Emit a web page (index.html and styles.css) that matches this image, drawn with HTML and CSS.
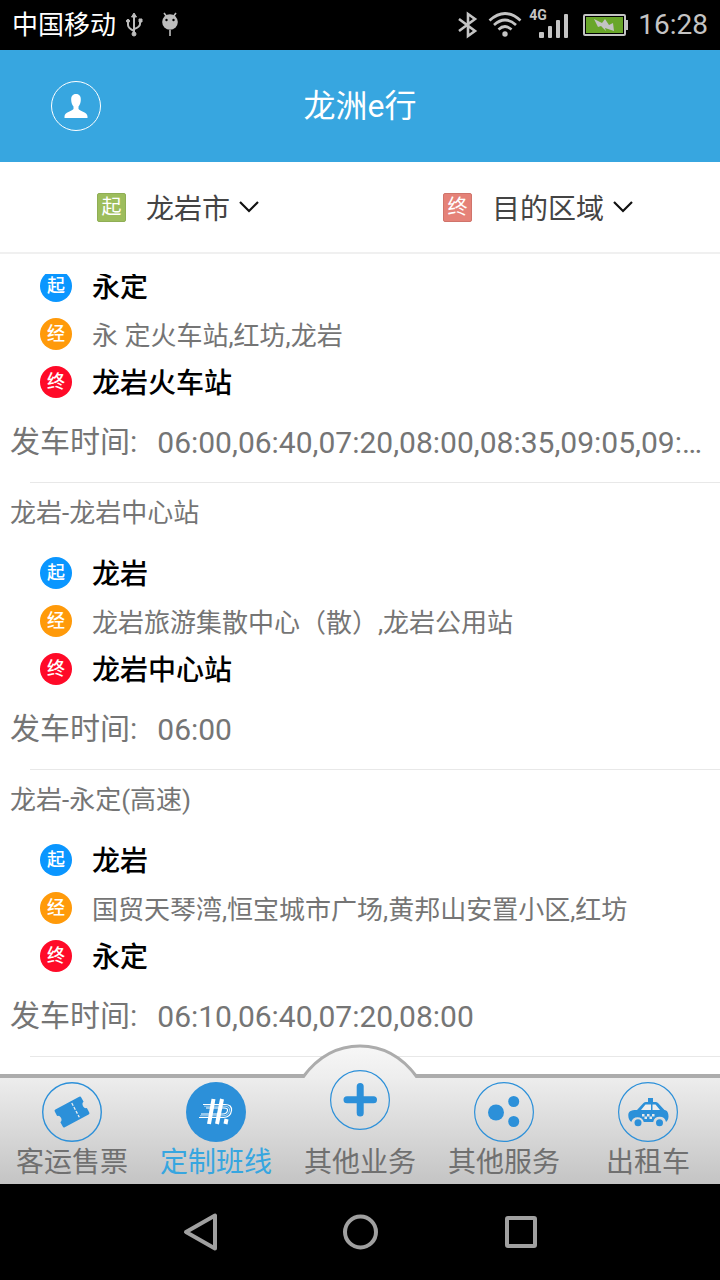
FILE: index.html
```html
<!DOCTYPE html>
<html lang="zh-CN">
<head>
<meta charset="utf-8">
<meta name="viewport" content="width=device-width, initial-scale=1">
<title>龙洲e行</title>
<link rel="stylesheet" href="styles.css">
</head>
<body>
<div class="status">
  <span class="carrier">中国移动</span>
  <svg class="usb" width="18" height="26" viewBox="0 0 18 26" fill="#bdbdbd" stroke="#bdbdbd" stroke-width="2"><path d="M9 4v17M3 9v4q0 3 6 6M15 9v3q0 3-6 5" fill="none"/><path d="M9 1l2.500 4h-5zM2 8h2v2H2zM14 7h3v3h-3z" stroke-width="1"/><circle cx="3" cy="9" r="1.500" stroke-width="1"/><circle cx="9" cy="22" r="2" stroke-width="1"/></svg>
  <svg class="debug" width="18" height="26" viewBox="0 0 18 26"><path d="M3 1l3 4M15 1l-3 4M9 18v6" stroke="#bdbdbd" stroke-width="1.600"/><circle cx="9" cy="10" r="7.800" fill="#bdbdbd"/><circle cx="5.500" cy="8" r="1.200"/><circle cx="12.500" cy="8" r="1.200"/></svg>
  <span class="grow"></span>
  <svg width="20" height="28" viewBox="0 0 20 28" fill="none" stroke="#c4c4c4" stroke-width="2.600"><path d="M1 8l16 12-7 5V3l7 5L1 20"/></svg>
  <svg class="wifi" width="34" height="28" viewBox="0 0 34 28" fill="none" stroke="#c4c4c4" stroke-width="2.700"><path d="M1.500 9.500Q17-4.500 32.500 9.500M6 14Q17 4 28 14M10.500 18.500Q17 12.500 23.500 18.500"/><circle cx="17" cy="23" r="2.700" fill="#c4c4c4" stroke="none"/></svg>
  <span class="signal"><span class="gen">4G</span><svg width="40" height="30" viewBox="0 0 40 30" fill="#c4c4c4"><rect x="10" y="24" width="5" height="6" rx="1"/><rect x="19" y="18" width="4" height="12" rx="1"/><rect x="27" y="12" width="4" height="18" rx="1"/><rect x="35" y="6" width="4" height="24" rx="1"/></svg></span>
  <svg class="battery" width="46" height="24" viewBox="0 0 46 24"><rect x="1" y="2" width="41" height="20" rx="1" fill="none" stroke="#c4c4c4" stroke-width="2"/><rect x="3" y="4" width="37" height="16" fill="#69a62a"/><path d="M43 7h2v10h-2z" fill="#c4c4c4"/><path d="M11 6l8 4 3-4 4 6 4-2 1 8-9-3 1 3-5-5-3 1z" fill="#c4c4c4"/></svg>
  <span class="clock">16:28</span>
</div>

<header class="header">
  <button class="user" aria-label="用户">
    <svg width="50" height="50" viewBox="0 0 50 50"><circle cx="25" cy="25" r="24.500" fill="none" stroke="#fff"/><path d="M25 13c-3.500 0-5 2.500-4.800 6 .1 3 1 5 2.300 6.500v2.500c-1.500 2.500-9 3-9 7.500V37h23v-1.500c0-4.500-7.500-5-9-7.500v-2.500c1.300-1.500 2.200-3.500 2.300-6.500.2-3.500-1.300-6-4.800-6z" fill="#fff"/></svg>
  </button>
  <h1 class="title">龙洲e行</h1>
</header>

<div class="filters">
  <button class="filter"><span class="tag tag-from">起</span><span class="place">龙岩市</span><svg class="chevron" width="20" height="14" viewBox="0 0 20 14"><path d="M1 2l9 9 9-9" fill="none" stroke="#111" stroke-width="2.200"/></svg></button>
  <button class="filter"><span class="tag tag-to">终</span><span class="place">目的区域</span><svg class="chevron" width="20" height="14" viewBox="0 0 20 14"><path d="M1 2l9 9 9-9" fill="none" stroke="#111" stroke-width="2.200"/></svg></button>
</div>

<main class="list">
  <article class="route route-scrolled">
    <ul class="stops">
      <li class="stop"><span class="dot from">起</span>永定</li>
      <li class="stop via-row"><span class="dot via">经</span>永 定火车站,红坊,龙岩</li>
      <li class="stop"><span class="dot to">终</span>龙岩火车站</li>
    </ul>
    <p class="times"><span class="label">发车时间:</span><span class="hours">06:00,06:40,07:20,08:00,08:35,09:05,09:…</span></p>
  </article>
  <article class="route">
    <h2 class="name">龙岩-龙岩中心站</h2>
    <ul class="stops">
      <li class="stop"><span class="dot from">起</span>龙岩</li>
      <li class="stop via-row"><span class="dot via">经</span>龙岩旅游集散中心（散）,龙岩公用站</li>
      <li class="stop"><span class="dot to">终</span>龙岩中心站</li>
    </ul>
    <p class="times"><span class="label">发车时间:</span><span class="hours">06:00</span></p>
  </article>
  <article class="route">
    <h2 class="name">龙岩-永定(高速)</h2>
    <ul class="stops">
      <li class="stop"><span class="dot from">起</span>龙岩</li>
      <li class="stop via-row"><span class="dot via">经</span>国贸天琴湾,恒宝城市广场,黄邦山安置小区,红坊</li>
      <li class="stop"><span class="dot to">终</span>永定</li>
    </ul>
    <p class="times"><span class="label">发车时间:</span><span class="hours">06:10,06:40,07:20,08:00</span></p>
  </article>
  <article class="route"></article>
</main>

<nav class="tabs">
  <svg class="hump" width="116" height="36" viewBox="0 0 116 36">
    <defs><linearGradient id="hump" x1="0" y1="0" x2="0" y2="1"><stop offset="0" stop-color="#f7f7f7"/><stop offset="1" stop-color="#ededed"/></linearGradient></defs>
    <path d="M2 34Q24 2 58 2t56 32v2H2z" fill="url(#hump)"/>
    <path d="M1 33Q24 2 58 2t57 31" fill="none" stroke="#acacac" stroke-width="3"/>
  </svg>
  <a class="tab" href="#tickets">
    <svg width="60" height="60" viewBox="0 0 60 60"><circle cx="30" cy="30" r="29.300" fill="none" stroke="#2c90d9" stroke-width="1.400"/><g transform="rotate(-28 30 30)"><path d="M16.500 20h27q1.500 0 1.500 1.500v5q-2.500.5-2.500 3.500t2.500 3.500v5q0 1.500-1.500 1.500h-27q-1.500 0-1.500-1.500v-5q2.500-.5 2.500-3.500t-2.500-3.500v-5q0-1.500 1.500-1.500z" fill="#2c90d9"/><path d="M34 22v16" stroke="#eee" stroke-width="1.300" stroke-dasharray="3 1.500"/></g></svg>
    <span>客运售票</span>
  </a>
  <a class="tab active" href="#lines" aria-current="page">
    <svg width="60" height="60" viewBox="0 0 60 60"><circle cx="30" cy="30" r="30" fill="#2c90d9"/><g fill="none" stroke="#fff"><path d="M27.500 17l-4.500 25M36 17l-5 25" stroke-width="4"/><path d="M40.500 37l-1 5" stroke-width="4"/><path d="M17 22.500h22q7 0 6.500 6-1 7-8 7H13" stroke-width="1.200"/><path d="M20 26h18q4 0 3.500 2.500-.5 3.500-5 3.500H15" stroke-width="1.200"/><path d="M18 24.200h21q5 .3 4.500 4.300-1 5.300-6.500 5.300H14" stroke-width="1" opacity=".6"/></g></svg>
    <span>定制班线</span>
  </a>
  <a class="tab raised" href="#more">
    <svg width="60" height="60" viewBox="0 0 60 60"><circle cx="30" cy="30" r="29.400" fill="none" stroke="#2c90d9" stroke-width="1.200"/><path d="M30.200 16.500v26.500M17 29.800h26.500" stroke="#2c90d9" stroke-width="7" stroke-linecap="round"/></svg>
    <span>其他业务</span>
  </a>
  <a class="tab" href="#services">
    <svg width="60" height="60" viewBox="0 0 60 60"><circle cx="30" cy="30" r="29.400" fill="none" stroke="#2c90d9" stroke-width="1.200"/><g fill="#2c90d9"><circle cx="22" cy="30.500" r="8"/><circle cx="39.700" cy="19.500" r="5.500"/><circle cx="39.700" cy="39.500" r="5.500"/></g></svg>
    <span>其他服务</span>
  </a>
  <a class="tab" href="#taxi">
    <svg width="60" height="60" viewBox="0 0 60 60"><circle cx="30" cy="30" r="29.400" fill="none" stroke="#2c90d9" stroke-width="1.200"/><path d="M30 16h5v4h2.500q1.500 0 2.500 1l6.500 7c3 .5 4 3 4 6.500 0 2.500-1 4.500-2.500 5.500a6.500 6.500 0 0 0-12.800 0H25.800a6.500 6.500 0 0 0-12.500 0c-2-1.500-3-3.500-3-6.500 0-4 2-5.500 8.700-5.500l6.500-7q1-1 2.500-1h2z" fill="#2c90d9"/><path d="M23 28l4.500-5.500h5.500V28zM34.500 22.500h3l4.500 5.500h-7.500z" fill="#eee"/><path d="M24 32h2.500v2.500H24zM29 32h2.500v2.500H29zM34 32h2.500v2.500H34zM26.500 34.500H29V37h-2.500zM31.500 34.500H34V37h-2.500z" fill="#e8e8e8"/><g fill="#2c90d9"><circle cx="20" cy="40.700" r="3.500"/><circle cx="41.500" cy="40.700" r="3.500"/></g></svg>
    <span>出租车</span>
  </a>
</nav>

<div class="system">
  <button aria-label="返回"><svg width="36" height="40" viewBox="0 0 36 40"><path d="M4 20L33 3.500v33z"/></svg></button>
  <button aria-label="主页"><svg width="36" height="40" viewBox="0 0 36 40"><circle cx="18.500" cy="20" r="15.500"/></svg></button>
  <button aria-label="最近任务"><svg width="36" height="40" viewBox="0 0 36 40"><rect x="5" y="6" width="28" height="28" rx="1"/></svg></button>
</div>
</body>
</html>
```
FILE: styles.css
```css
* { box-sizing: border-box; }
body {
  margin: 0;
  height: 100vh;
  display: flex;
  flex-direction: column;
  overflow: hidden;
  background: #fff;
  color: #757575;
  font-family: Roboto, "Noto Sans CJK SC", sans-serif;
}
svg { display: block; flex: none; }
button { padding: 0; border: 0; background: none; font: inherit; color: inherit; }
h1, h2, p, ul { margin: 0; padding: 0; font-weight: 400; }

.status {
  flex: none;
  display: flex;
  align-items: center;
  height: 50px;
  padding: 0 12px;
  background: #000;
  color: #c4c4c4;
}
.carrier { color: #fff; font-size: 26px; line-height: 48px; }
.usb { margin-left: 9px; }
.debug { margin-left: 18px; }
.grow { flex: 1; }
.wifi { margin-left: 10px; }
.signal { position: relative; margin-left: 7px; padding-bottom: 4px; }
.gen { position: absolute; left: 0; top: 0; font-size: 14px; line-height: 14px; font-weight: 700; }
.battery { margin-left: 14px; }
.clock { margin-left: 9px; font-size: 28px; line-height: 52px; }

.header {
  flex: none;
  display: grid;
  grid-template-columns: 50px 1fr 50px;
  align-items: center;
  height: 112px;
  padding: 0 51px;
  background: #37a6e0;
  color: #fff;
}
.title { font-size: 32px; line-height: 48px; text-align: center; }

.filters {
  flex: none;
  display: flex;
  height: 92px;
  border-bottom: 2px solid #f0f0f0;
  color: #444;
}
.filter {
  flex: 1;
  display: flex;
  align-items: center;
  justify-content: center;
  padding-right: 4px;
  font-size: 28px;
  line-height: 40px;
}
.place { padding-top: 5px; }
.tag {
  width: 29px;
  height: 29px;
  margin-right: 20px;
  border: 1px solid #8fae55;
  border-radius: 2px;
  background: #9dbd5c;
  color: #fff;
  font-size: 20px;
  line-height: 26px;
  text-align: center;
}
.tag-to { background: #e58278; border-color: #d0746b; }
.chevron { margin-left: 9px; }

.list { flex: 1; min-height: 0; overflow: hidden; margin-top: 20px; }
.route { padding-bottom: 4px; }
.route + .route::before {
  content: "";
  display: block;
  height: 1px;
  margin-left: 30px;
  background: #e8e8e8;
}
.route-scrolled { margin-top: -12px; }
.name { height: 66px; padding-left: 10px; font-size: 26px; line-height: 60px; }
.stops { list-style: none; padding-left: 40px; }
.stop {
  display: flex;
  height: 48px;
  font-size: 28px;
  font-weight: 500;
  line-height: 52px;
  white-space: nowrap;
  color: #000;
}
.via-row { font-size: 26px; font-weight: 400; color: #757575; }
.dot {
  flex: none;
  width: 32px;
  height: 32px;
  margin: 8px 20px 8px 0;
  border-radius: 50%;
  color: #fff;
  font-size: 18px;
  font-weight: 500;
  line-height: 32px;
  text-align: center;
}
.from { background: #0a96ff; }
.via { background: #ff9a0a; }
.to { background: #ff0a28; }
.times {
  display: flex;
  height: 72px;
  padding-left: 10px;
  font-size: 30px;
  line-height: 72px;
  white-space: nowrap;
}
.label { margin-right: 20px; }
.hours { line-height: 74px; }

.tabs {
  flex: none;
  position: relative;
  display: flex;
  height: 110px;
  border-top: 4px solid #acacac;
  background: linear-gradient(#ededed, #c4c4c4);
}
.hump { position: absolute; left: 50%; top: -34px; margin-left: -58px; }
.tab {
  flex: 1;
  position: relative;
  display: flex;
  flex-direction: column;
  align-items: center;
  justify-content: space-between;
  padding: 4px 0 2px;
  color: #707070;
  font-size: 28px;
  line-height: 38px;
  text-decoration: none;
}
.active { color: #37a6e0; }
.raised { margin-top: -12px; }

.system {
  flex: none;
  display: flex;
  justify-content: center;
  align-items: center;
  gap: 124px;
  height: 96px;
  background: #000;
}
.system svg { fill: none; stroke: #a0a0a0; stroke-width: 4; stroke-linejoin: round; }
```
